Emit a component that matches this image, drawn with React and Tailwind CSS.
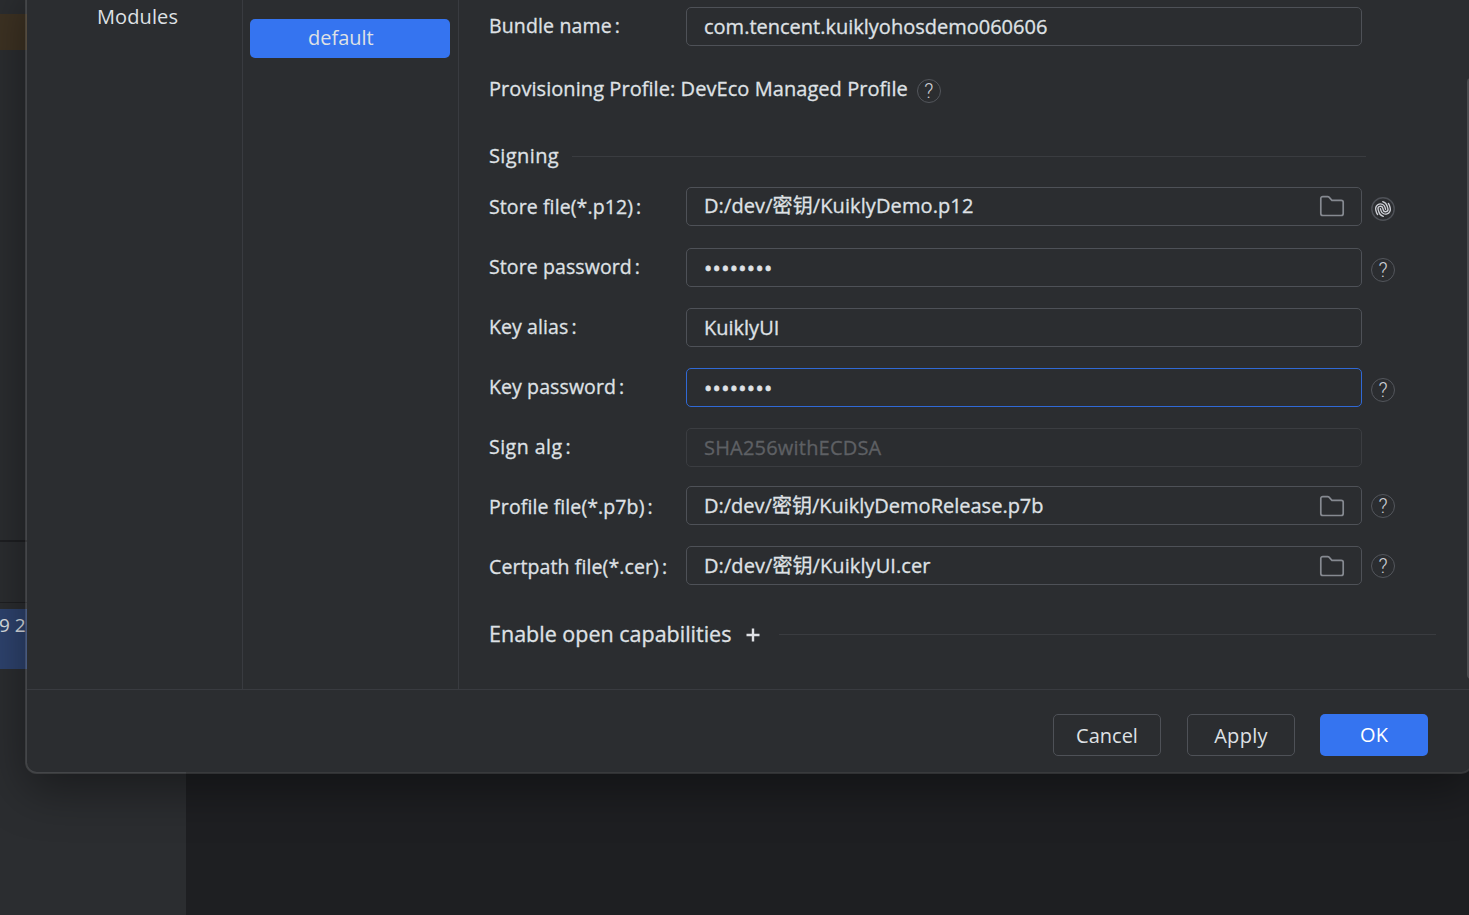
import { clsx } from "clsx";

const fields = [
  {
    label: "Store file(*.p12)",
    value: "D:/dev/密钥/KuiklyDemo.p12",
    inputClass: "mt-[10px] pb-px tracking-[0.1px]",
    browse: true,
    action: "fingerprint",
    actionClass: "mt-5",
  },
  {
    label: "Store password",
    value: "••••••••",
    password: true,
    inputClass: "mt-[11px]",
    action: "help",
    actionClass: "mt-[21px]",
  },
  { label: "Key alias", value: "KuiklyUI", inputClass: "mt-[11px] pt-px" },
  {
    label: "Key password",
    value: "••••••••",
    password: true,
    focused: true,
    inputClass: "mt-[11px]",
    action: "help",
    actionClass: "mt-[21px]",
  },
  {
    label: "Sign alg",
    labelClass: "tracking-[0.5px]",
    value: "SHA256withECDSA",
    disabled: true,
    inputClass: "mt-[11px] pt-px tracking-[0.2px]",
  },
  {
    label: "Profile file(*.p7b)",
    value: "D:/dev/密钥/KuiklyDemoRelease.p7b",
    inputClass: "mt-[9px]",
    browse: true,
    action: "help",
    actionClass: "mt-[17px]",
  },
  {
    label: "Certpath file(*.cer)",
    value: "D:/dev/密钥/KuiklyUI.cer",
    inputClass: "mt-[9px] tracking-[0.08px]",
    browse: true,
    action: "help",
    actionClass: "mt-[17px]",
  },
];

function FolderIcon() {
  return (
    <svg width="26" height="22" viewBox="0 0 26 22" fill="none">
      <path
        d="M3.8 1.6h4.8c.6 0 1 .2 1.4.6l2.9 3.1h9.300a2 2 0 0 1 2 2v11.200a2 2 0 0 1-2 2H3.800a2 2 0 0 1-2-2V3.600a2 2 0 0 1 2-2Z"
        stroke="#868a91"
        strokeWidth="1.7"
      />
    </svg>
  );
}

function FingerprintIcon({ className }) {
  return (
    <svg
      width="24"
      height="24"
      viewBox="0 0 24 24"
      fill="none"
      className={clsx("shrink-0", className)}
    >
      <circle cx="12" cy="12" r="11.2" stroke="#4e5157" strokeWidth="1.4" />
      {/* two interlocked sets of ridges, each the other turned by 180° */}
      <g
        stroke="#ced0d6"
        strokeWidth="1.35"
        strokeLinecap="round"
        transform="rotate(-16 12 12)"
      >
        <path d="M10.200 19.200C8.300 18 7.200 16 7.200 13.800V11a2.400 2.400 0 0 1 4.800 0v2a2.400 2.400 0 0 0 4.800 0v-2.800c0-2.200-1.100-4.200-3-5.400" />
        <path d="M5.300 15.800c-.4-1-.5-1.900-.5-2.800v-2a4.800 4.800 0 0 1 9.600 0v2" />
        <path d="M18.700 8.200c.4 1 .5 1.900.5 2.800v2a4.800 4.800 0 0 1-9.600 0v-2" />
      </g>
    </svg>
  );
}

function HelpIcon({ className }) {
  return (
    <span
      className={clsx(
        "flex h-6 w-6 shrink-0 items-center justify-center rounded-full border border-[#53565c] font-['Roboto',sans-serif] text-[20px] leading-none font-light tracking-normal text-[#ced0d6] [-webkit-text-stroke:0]",
        className
      )}
    >
      ?
    </span>
  );
}

function Label({ children, className }) {
  return (
    <span className={clsx("flex text-[19.5px] whitespace-nowrap", className)}>
      {children}
      <span className="ml-[3px]">:</span>
    </span>
  );
}

function TextBox({ value, password, focused, disabled, browse, className }) {
  return (
    <div
      className={clsx(
        "flex h-[39px] w-[676px] shrink-0 items-center justify-between rounded-[5px] border pr-4 pl-[17px] whitespace-nowrap",
        focused && "border-[#3069d6]",
        disabled && "border-[#3b3d41] text-[#5e6064]",
        !focused && !disabled && "border-[#4e5157]",
        className
      )}
    >
      <span className={password ? "text-[22px] tracking-[0.3px] [-webkit-text-stroke:0.6px]" : ""}>
        {value}
      </span>
      {browse ? <FolderIcon /> : null}
    </div>
  );
}

function FieldRow({ field }) {
  return (
    <div className="flex h-[60px] items-start">
      <Label
        className={clsx(
          "w-[197px] shrink-0 leading-[60px]",
          field.labelClass || "tracking-[0.1px]"
        )}
      >
        {field.label}
      </Label>
      <TextBox
        value={field.value}
        password={field.password}
        focused={field.focused}
        disabled={field.disabled}
        browse={field.browse}
        className={field.inputClass}
      />
      {field.action === "help" ? (
        <HelpIcon className={clsx("ml-[9px]", field.actionClass)} />
      ) : null}
      {field.action === "fingerprint" ? (
        <FingerprintIcon className={clsx("ml-[9px]", field.actionClass)} />
      ) : null}
    </div>
  );
}

function SigningForm() {
  return (
    <main className="flex min-w-0 flex-1 flex-col pl-[30px] [-webkit-text-stroke:0.3px]">
      <div className="flex h-[53px] items-start">
        <Label className="w-[197px] shrink-0 leading-[52px] tracking-[0.15px]">
          Bundle name
        </Label>
        <TextBox value="com.tencent.kuiklyohosdemo060606" className="mt-[7px] pt-px" />
      </div>
      <div className="flex h-[73px] items-center gap-[9px]">
        <span className="pb-0.5 tracking-[0.06px]">
          Provisioning Profile: DevEco Managed Profile
        </span>
        <HelpIcon className="mt-[3px]" />
      </div>
      <div className="flex h-[51px] w-[877px] items-center gap-[13px] pt-[9px]">
        <span className="tracking-[0.4px]">Signing</span>
        <span className="h-px flex-1 bg-[#3a3c40]" />
      </div>
      {fields.map((field) => (
        <FieldRow key={field.label} field={field} />
      ))}
      <div className="flex h-[75px] w-[947px] items-center text-[21.5px]">
        <span>Enable open capabilities</span>
        <svg width="14" height="14" viewBox="0 0 14 14" className="ml-[15px]">
          <path d="M7 .5v13M.5 7h13" stroke="#dfe1e5" strokeWidth="2.4" />
        </svg>
        <span className="ml-[19px] h-px flex-1 bg-[#3a3c40]" />
      </div>
    </main>
  );
}

function Dialog() {
  return (
    <div className="absolute -top-5 left-[25px] flex h-[794px] w-[1448px] flex-col rounded-xl border-2 border-white/12 bg-[#2b2d30] bg-clip-padding pt-[18px] shadow-[0_16px_48px_rgba(0,0,0,0.4)]">
      <div className="flex h-[689px] shrink-0">
        <nav className="w-[215px] shrink-0 pl-[70px] leading-[33px] tracking-[0.1px]">
          Modules
        </nav>
        <aside className="w-[217px] shrink-0 border-x border-[#393b40] px-[7px] pt-[19px]">
          <div className="flex h-[39px] w-[200px] items-center rounded-[5px] bg-[#3574f0] pb-0.5 pl-[58px]">
            default
          </div>
        </aside>
        <SigningForm />
        <div className="mt-[78px] h-[601px] w-1 shrink-0 rounded-l-sm bg-[#4b4c4f]" />
      </div>
      <footer className="flex flex-1 items-start justify-end gap-[26px] border-t border-[#393b40] pt-6 pr-[43px]">
        <button className="h-[42px] w-[108px] rounded-[5px] border border-[#4e5157] pt-0.5">
          Cancel
        </button>
        <button className="h-[42px] w-[108px] rounded-[5px] border border-[#4e5157] pt-0.5 tracking-[0.3px]">
          Apply
        </button>
        <button className="-ml-px h-[42px] w-[108px] rounded-[5px] bg-[#3574f0] text-white">
          OK
        </button>
      </footer>
    </div>
  );
}

export default function App() {
  return (
    <div className="relative flex h-[915px] w-[1469px] overflow-hidden bg-[#1e1f22] font-['Open_Sans','Noto_Sans_CJK_SC',sans-serif] text-[20px] text-[#dfe1e5]">
      {/* tool window behind the dialog */}
      <div className="w-[186px] shrink-0 bg-[#2b2d30] pt-[14px]">
        <div className="h-9 bg-[#3d3223]" />
        <div className="mt-[490px] h-0.5 bg-[#1e1f22]" />
        <div className="mt-[60px] h-px bg-[#1e1f22]" />
        <div className="mt-1.5 h-[60px] bg-[#2e436e] text-[19px] leading-8 whitespace-nowrap">
          <span className="-ml-px">9 2</span>
        </div>
      </div>
      <Dialog />
    </div>
  );
}
